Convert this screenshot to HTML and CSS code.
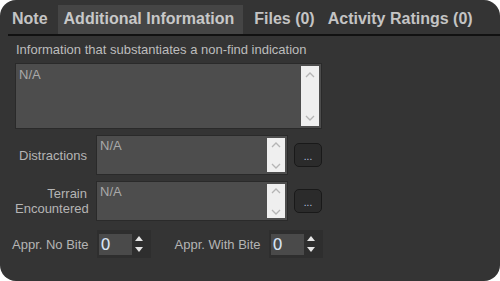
FILE: index.html
```html
<!DOCTYPE html>
<html lang="en">
<head>
    <meta charset="UTF-8">
    <title>Additional Information</title>
    <link rel="stylesheet" href="styles.css">
</head>
<body>
    <div class="panel">
        <div class="tabs">
            <div class="tab note">Note</div>
            <div class="tab active">Additional Information</div>
            <div class="tab files">Files (0)</div>
            <div class="tab">Activity Ratings (0)</div>
        </div>
        <div class="content">
            <div class="caption">Information that substantiates a non-find indication</div>
            <div class="memo big">
                <div class="memo-text">N/A</div>
                <div class="scroll">
                    <svg width="10" height="6" viewBox="0 0 10 6"><path d="M1 5 L5 1 L9 5" fill="none" stroke="#b5b5b5" stroke-width="1.3"/></svg>
                    <svg width="10" height="6" viewBox="0 0 10 6"><path d="M1 1 L5 5 L9 1" fill="none" stroke="#b5b5b5" stroke-width="1.3"/></svg>
                </div>
            </div>

            <div class="field-row">
                <div class="label">Distractions</div>
                <div class="memo small">
                    <div class="memo-text">N/A</div>
                    <div class="scroll">
                        <svg width="10" height="6" viewBox="0 0 10 6"><path d="M1 5 L5 1 L9 5" fill="none" stroke="#b5b5b5" stroke-width="1.3"/></svg>
                        <svg width="10" height="6" viewBox="0 0 10 6"><path d="M1 1 L5 5 L9 1" fill="none" stroke="#b5b5b5" stroke-width="1.3"/></svg>
                    </div>
                </div>
                <div class="more">...</div>
            </div>

            <div class="field-row">
                <div class="label">Terrain<br>Encountered</div>
                <div class="memo small">
                    <div class="memo-text">N/A</div>
                    <div class="scroll">
                        <svg width="10" height="6" viewBox="0 0 10 6"><path d="M1 5 L5 1 L9 5" fill="none" stroke="#b5b5b5" stroke-width="1.3"/></svg>
                        <svg width="10" height="6" viewBox="0 0 10 6"><path d="M1 1 L5 5 L9 1" fill="none" stroke="#b5b5b5" stroke-width="1.3"/></svg>
                    </div>
                </div>
                <div class="more">...</div>
            </div>

            <div class="spin-row">
                <div class="label">Appr. No Bite</div>
                <div class="spinner">
                    <div class="spin-value">0</div>
                    <div class="spin-arrows">
                        <svg width="10" height="6" viewBox="0 0 10 6"><path d="M1 6 L5 1 L9 6 Z" fill="#e6e6e6"/></svg>
                        <svg width="10" height="6" viewBox="0 0 10 6"><path d="M1 0 L5 5 L9 0 Z" fill="#e6e6e6"/></svg>
                    </div>
                </div>
                <div class="label second">Appr. With Bite</div>
                <div class="spinner">
                    <div class="spin-value">0</div>
                    <div class="spin-arrows">
                        <svg width="10" height="6" viewBox="0 0 10 6"><path d="M1 6 L5 1 L9 6 Z" fill="#e6e6e6"/></svg>
                        <svg width="10" height="6" viewBox="0 0 10 6"><path d="M1 0 L5 5 L9 0 Z" fill="#e6e6e6"/></svg>
                    </div>
                </div>
            </div>
        </div>
    </div>
</body>
</html>
```

FILE: styles.css
```css
* {
    margin: 0;
    padding: 0;
    box-sizing: border-box;
}
body {
    background: #ffffff;
    font-family: 'Liberation Sans', Arial, sans-serif;
    width: 500px;
    height: 281px;
    overflow: hidden;
}
.panel {
    width: 500px;
    height: 281px;
    background: #343434;
    border-radius: 16px;
    overflow: hidden;
}
.tabs {
    display: flex;
    align-items: stretch;
    margin-top: 5px;
    margin-left: 8px;
    height: 31px;
    border-bottom: 2px solid #111111;
}
.tab {
    font-size: 16px;
    font-weight: bold;
    color: #c4c4c4;
    padding: 0 4px 2px;
    display: flex;
    align-items: center;
    margin-right: 2px;
    white-space: nowrap;
}
.tab.note {
    margin-right: 6px;
}
.tab.active {
    background: #454545;
    color: #c8c8c8;
    padding: 0 9px 2px 6px;
    margin-right: 7px;
}
.tab.files {
    margin-right: 5px;
}
.content {
    padding: 6px 0 0 15px;
}
.caption {
    font-size: 13px;
    color: #bdbdbd;
    padding-left: 1px;
    height: 17px;
}
.memo {
    display: flex;
    background: #4d4d4d;
    border: 1px solid #2a2a2a;
    padding: 2px;
}
.memo.big {
    height: 66px;
    margin-top: 4px;
    width: 307px;
}
.memo.small {
    height: 40px;
    width: 192px;
}
.memo-text {
    flex: 1;
    font-size: 13px;
    color: #a9a9a9;
    padding: 0 0 0 1px;
    line-height: 15px;
}
.memo.big .memo-text {
    padding-top: 1px;
}
.scroll {
    width: 18px;
    background: #efefef;
    display: flex;
    flex-direction: column;
    justify-content: space-between;
    align-items: center;
    padding: 6px 0 5px;
}
.memo.small .scroll {
    padding: 4px 0 3px;
}
.field-row {
    display: flex;
    align-items: center;
    margin-top: 6px;
}
.field-row:first-of-type {
    margin-top: 7px;
}
.label {
    width: 72px;
    flex-shrink: 0;
    margin-right: 9px;
    text-align: right;
    font-size: 13px;
    color: #b5b5b5;
    line-height: 15px;
}
.more {
    width: 28px;
    height: 24px;
    margin-left: 6px;
    background: #2b2b2b;
    border: 1px solid #191919;
    border-radius: 5px;
    color: #b8c8e0;
    font-size: 10px;
    display: flex;
    justify-content: center;
    align-items: flex-end;
    padding-bottom: 5px;
    line-height: 8px;
}
.spin-row {
    display: flex;
    align-items: center;
    margin-top: 9px;
    margin-left: -3px;
}
.spin-row .label {
    width: auto;
    white-space: nowrap;
    margin-right: 8px;
    margin-left: 0;
}
.spin-row .label.second {
    margin-left: 24px;
}
.spinner {
    display: flex;
    align-items: center;
    flex-shrink: 0;
    width: 54px;
    height: 28px;
    background: #2e2e2e;
    padding: 3px 4px 3px 2px;
}
.spin-value {
    width: 33px;
    height: 21px;
    background: #4a4a4a;
    color: #d8e4f4;
    font-size: 16px;
    font-family: 'DejaVu Sans', sans-serif;
    padding-left: 2px;
    line-height: 21px;
}
.spin-arrows {
    flex: 1;
    display: flex;
    flex-direction: column;
    align-items: center;
    justify-content: space-between;
    height: 20px;
    padding: 1px 0;
}
```
